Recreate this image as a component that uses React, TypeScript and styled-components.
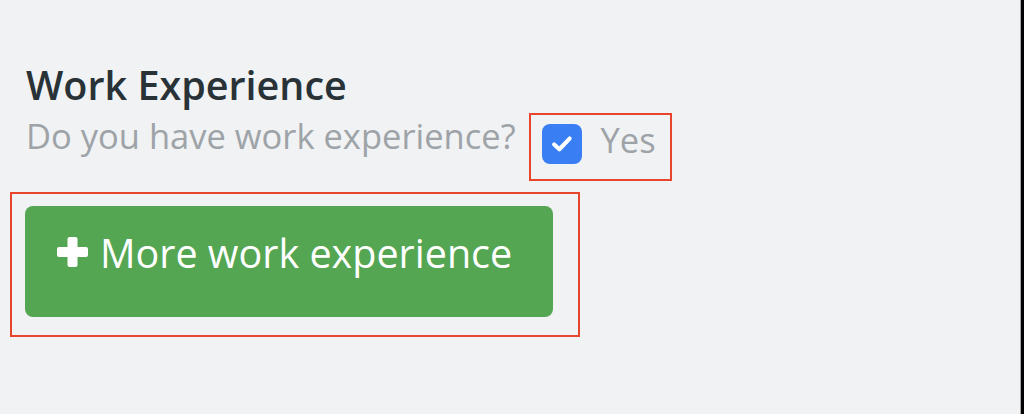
import React from "react";
import styled, { createGlobalStyle } from "styled-components";

const Global = createGlobalStyle`
  html, body { margin: 0; padding: 0; }
  body {
    background: #f0f2f4;
    font-family: "Open Sans", "Noto Sans", sans-serif;
  }
`;

const Frame = styled.div`
  display: flex;
  width: 1024px;
  height: 414px;
  overflow: hidden;
`;

const Content = styled.main`
  flex: 1;
  display: flex;
  flex-direction: column;
  align-items: flex-start;
  padding: 63px 0 0 26px;
  background: #f0f2f4;
`;

const Rail = styled.div`
  width: 3px;
  border-left: 1px solid #a4a6a8;
  background: #000;
`;

const Heading = styled.h2`
  margin: 0;
  font-size: 39.5px;
  line-height: 44px;
  font-weight: 600;
  color: #283237;
`;

const QuestionRow = styled.div`
  display: flex;
  align-items: flex-start;
  gap: 13px;
  margin-top: 6px;
`;

const Question = styled.span`
  margin-top: 3px;
  font-size: 34.5px;
  line-height: 40px;
  color: #9ea3a8;
`;

const Highlight = styled.div<{ $pad: string }>`
  display: flex;
  align-items: flex-start;
  border: 2px solid #e8452c;
  padding: ${(p) => p.$pad};
`;

const CheckLabel = styled.label`
  display: flex;
  align-items: flex-start;
  gap: 19px;
  cursor: pointer;
`;

const CheckBox = styled.span`
  width: 40px;
  height: 40px;
  border-radius: 8px;
  background: #3a7ef4;
  display: flex;
  align-items: center;
  justify-content: center;
`;

const CheckText = styled.span`
  margin-top: -4px;
  font-size: 34.5px;
  line-height: 40px;
  color: #9ea3a8;
`;

const ButtonFrame = styled(Highlight)`
  margin-top: 11px;
  margin-left: -16px;
`;

const AddButton = styled.button`
  width: 528px;
  height: 111px;
  border: none;
  border-radius: 8px;
  background: #54a653;
  color: #fff;
  display: flex;
  align-items: flex-start;
  gap: 12px;
  padding: 23px 0 0 32px;
  font-family: "Open Sans", "Noto Sans", sans-serif;
  font-size: 39.5px;
  line-height: 48px;
  font-weight: 400;
  white-space: nowrap;
  cursor: pointer;
`;

const PlusIcon = styled.svg`
  margin-top: 8px;
  flex: none;
`;

export default function App() {
  return (
    <>
      <Global />
      <Frame>
        <Content>
          <Heading>Work Experience</Heading>
          <QuestionRow>
            <Question>Do you have work experience?</Question>
            <Highlight $pad="9px 14px 15px 11px">
              <CheckLabel>
                <CheckBox>
                  <svg width="22" height="18" viewBox="0 0 22 18">
                    <path
                      d="M3.2 9.5 L8.4 14.2 L18.6 3.6"
                      fill="none"
                      stroke="#fff"
                      strokeWidth="4.2"
                      strokeLinecap="round"
                      strokeLinejoin="round"
                    />
                  </svg>
                </CheckBox>
                <CheckText>Yes</CheckText>
              </CheckLabel>
            </Highlight>
          </QuestionRow>
          <ButtonFrame $pad="12px 25px 18px 13px">
            <AddButton>
              <PlusIcon width="31" height="30" viewBox="0 0 31 30">
                <rect x="0" y="10" width="31" height="10" rx="2" fill="#fff" />
                <rect x="10.5" y="0" width="10" height="30" rx="2" fill="#fff" />
              </PlusIcon>
              More work experience
            </AddButton>
          </ButtonFrame>
        </Content>
        <Rail />
      </Frame>
    </>
  );
}
